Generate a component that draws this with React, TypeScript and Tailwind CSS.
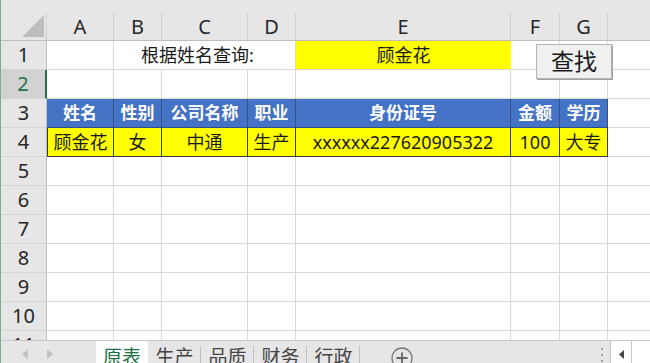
const font = "font-['Noto_Sans','Noto_Sans_CJK_SC',sans-serif]";

const cols = [
  { key: "A", w: "w-[67px]" },
  { key: "B", w: "w-[48px]" },
  { key: "C", w: "w-[86px]" },
  { key: "D", w: "w-[48px]" },
  { key: "E", w: "w-[215px]" },
  { key: "F", w: "w-[49px]" },
  { key: "G", w: "w-[48px]" },
];

const headers = ["姓名", "性别", "公司名称", "职业", "身份证号", "金额", "学历"];
const record = ["顾金花", "女", "中通", "生产", "xxxxxx227620905322", "100", "大专"];

const RowHead = ({ n, active }: { n: number; active?: boolean }) => (
  <div
    className={`w-[46px] shrink-0 h-full flex items-center justify-center text-[20px] border-b border-[#d4d4d4] ${
      active
        ? "bg-[#d2d2d2] text-[#217346] border-r-2 border-r-[#217346]"
        : "bg-[#e6e6e6] text-[#262626] border-r border-r-[#bdbdbd]"
    }`}
  >
    {n}
  </div>
);

const EmptyRow = ({ n, active }: { n: number; active?: boolean }) => (
  <div className="flex h-[29px] shrink-0">
    <RowHead n={n} active={active} />
    {cols.map((c) => (
      <div key={c.key} className={`${c.w} shrink-0 border-r border-b border-[#d9d9d9] bg-white`} />
    ))}
    <div className="flex-1 border-b border-[#d9d9d9] bg-white" />
  </div>
);

export default function App() {
  return (
    <div className={`${font} w-[650px] h-[363px] overflow-hidden flex flex-col bg-white border-l border-[#7fae8e] relative`}>
      {/* column headers */}
      <div className="h-[13px] shrink-0 bg-[#e6e6e6]" />
      <div className="flex h-[28px] shrink-0 bg-[#e6e6e6] border-b border-[#bdbdbd]">
        <div className="w-[46px] shrink-0 flex items-end justify-end pr-[2px] pb-[3px] border-r border-[#d0d0d0]">
          <svg width="22" height="22" viewBox="0 0 22 22">
            <polygon points="22,0 22,22 0,22" fill="#bdbdbd" />
          </svg>
        </div>
        {cols.map((c) => (
          <div
            key={c.key}
            className={`${c.w} shrink-0 flex items-center justify-center text-[20px] text-[#262626] border-r border-[#d0d0d0]`}
          >
            {c.key}
          </div>
        ))}
        <div className="flex-1" />
      </div>

      <div className="flex-1 overflow-hidden flex flex-col">
        {/* row 1 */}
        <div className="flex h-[29px] shrink-0">
          <RowHead n={1} />
          <div className="w-[67px] shrink-0 border-r border-b border-[#d9d9d9]" />
          <div className="w-[182px] shrink-0 border-r border-b border-[#d9d9d9] flex items-center justify-center pr-[14px] text-[18px] text-[#1a1a1a]">
            根据姓名查询:
          </div>
          <div className="w-[215px] shrink-0 bg-[#ffff00] border-b border-[#d9d9d9] flex items-center justify-center text-[18px] text-[#1a1a1a]">
            顾金花
          </div>
          <div className="w-[49px] shrink-0 border-r border-b border-[#d9d9d9]" />
          <div className="w-[48px] shrink-0 border-r border-b border-[#d9d9d9]" />
          <div className="flex-1 border-b border-[#d9d9d9]" />
        </div>

        <EmptyRow n={2} active />

        {/* row 3 */}
        <div className="flex h-[29px] shrink-0">
          <RowHead n={3} />
          {cols.map((c, i) => (
            <div
              key={c.key}
              className={`${c.w} shrink-0 bg-[#4472c4] text-white font-bold text-[17px] flex items-center justify-center border-r border-b border-[#2f4f86]`}
            >
              {headers[i]}
            </div>
          ))}
          <div className="flex-1 border-b border-[#d9d9d9]" />
        </div>

        {/* row 4 */}
        <div className="flex h-[29px] shrink-0">
          <RowHead n={4} />
          {cols.map((c, i) => (
            <div
              key={c.key}
              className={`${c.w} shrink-0 bg-[#ffff00] text-[#1a1a1a] text-[18px] flex items-center justify-center border-r border-b border-[#3a3a3a] ${
                i === 0 ? "border-l" : ""
              }`}
            >
              {record[i]}
            </div>
          ))}
          <div className="flex-1 border-b border-[#d9d9d9]" />
        </div>

        {[5, 6, 7, 8, 9, 10, 11].map((n) => (
          <EmptyRow key={n} n={n} />
        ))}
      </div>

      {/* sheet tabs */}
      <div className="h-[23px] shrink-0 flex items-start bg-[#e6e6e6] border-t border-[#c6c6c6] overflow-hidden">
        <div className="w-[95px] shrink-0 h-full flex items-center pl-[21px] gap-[19px] pt-[4px]">
          <svg width="6" height="10" viewBox="0 0 6 10">
            <polygon points="6,0 6,10 0,5" fill="#c2c2c2" />
          </svg>
          <svg width="6" height="10" viewBox="0 0 6 10">
            <polygon points="0,0 0,10 6,5" fill="#c2c2c2" />
          </svg>
        </div>
        <div className="w-[52px] shrink-0 h-[30px] bg-white text-[#217346] text-[19px] flex justify-center pt-[2px]">
          原表
        </div>
        {["生产", "品质", "财务", "行政"].map((t) => (
          <div key={t} className="w-[53px] shrink-0 flex justify-center text-[19px] text-[#444] pt-[2px] relative">
            {t}
            <span className="absolute right-0 top-[5px] h-[20px] border-r border-[#c0c0c0]" />
          </div>
        ))}
        <div className="w-[84px] shrink-0 flex justify-center pt-[6px]">
          <svg width="22" height="22" viewBox="0 0 22 22">
            <circle cx="11" cy="11" r="10" fill="none" stroke="#777" strokeWidth="1.3" />
            <path d="M11 5.5v11M5.5 11h11" stroke="#666" strokeWidth="1.8" />
          </svg>
        </div>
        <div className="flex-1" />
        <div className="w-[16px] shrink-0 flex flex-col items-center gap-[4px] pt-[7px]">
          <span className="w-[2px] h-[2px] bg-[#a0a0a0]" />
          <span className="w-[2px] h-[2px] bg-[#a0a0a0]" />
          <span className="w-[2px] h-[2px] bg-[#a0a0a0]" />
        </div>
        <div className="w-[22px] shrink-0 h-full bg-white border-l border-r border-[#c6c6c6] flex items-center justify-center pt-[4px]">
          <svg width="5" height="9" viewBox="0 0 5 9">
            <polygon points="5,0 5,9 0,4.5" fill="#444" />
          </svg>
        </div>
        <div className="w-[18px] shrink-0 h-full bg-white" />
      </div>

      {/* button */}
      <button className="absolute left-[535px] top-[44px] w-[76px] h-[35px] bg-[#f0f0f0] border border-[#b4b4b4] shadow-[1px_1px_0_#a0a0a0] text-[23px] text-[#1a1a1a] flex items-center justify-center leading-none">
        查找
      </button>
    </div>
  );
}
